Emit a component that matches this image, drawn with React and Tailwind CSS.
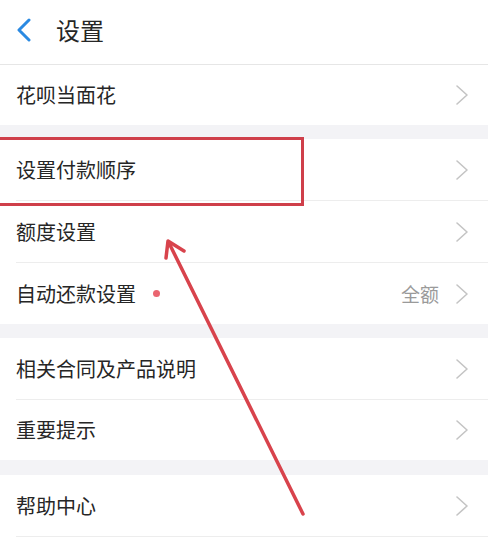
import React from "react";

const font = { fontFamily: '"Noto Sans CJK SC", "Noto Sans", sans-serif' };

function Chevron() {
  return (
    <svg width="14" height="22" viewBox="0 0 14 22" className="shrink-0">
      <polyline points="2,2 12,11 2,20" fill="none" stroke="#c4c4c4" strokeWidth="1.6" strokeLinecap="round" strokeLinejoin="round" />
    </svg>
  );
}

function Row({ label, value, dot, divider = true, h = "h-[61px]" }) {
  return (
    <div className={`${h} bg-white pl-4 flex`}>
      <div className={`flex-1 flex items-center pr-[19px] ${divider ? "border-b border-[#ededed]" : ""}`}>
        <span className="text-[20px] text-[#262626] leading-none">{label}</span>
        {dot && <span className="ml-[17px] w-[7px] h-[7px] rounded-full bg-[#ea6570]" />}
        <span className="flex-1" />
        {value && <span className="text-[19px] text-[#9a9a9a] mr-[16px] leading-none">{value}</span>}
        <Chevron />
      </div>
    </div>
  );
}

function Gap({ h }) {
  return <div className={`${h} bg-[#f3f3f6]`} />;
}

export default function App() {
  return (
    <div className="relative w-[488px] h-[538px] overflow-hidden bg-white" style={font}>
      {/* header */}
      <div className="h-[65px] flex items-center pb-[5px] border-b border-[#e6e6e6]">
        <svg width="16" height="24" viewBox="0 0 16 24" className="ml-[16px]">
          <polyline points="13,2 3,12 13,22" fill="none" stroke="#2b8ae2" strokeWidth="3" strokeLinecap="round" strokeLinejoin="round" />
        </svg>
        <span className="ml-[24px] text-[24px] text-[#262626] leading-none">设置</span>
      </div>

      <Row label="花呗当面花" divider={false} h="h-[60px]" />
      <Gap h="h-[14px]" />
      <Row label="设置付款顺序" h="h-[62px]" />
      <Row label="额度设置" h="h-[62px]" />
      <Row label="自动还款设置" value="全额" dot divider={false} />
      <Gap h="h-[14px]" />
      <Row label="相关合同及产品说明" h="h-[62px]" />
      <Row label="重要提示" divider={false} h="h-[60px]" />
      <Gap h="h-[15px]" />
      <Row label="帮助中心" h="h-[62px]" />

      {/* annotation box */}
      <div className="absolute left-[-4px] top-[137px] w-[308px] h-[69px] border-[3px] border-[#cf3f4a]" />

      {/* annotation arrow */}
      <svg className="absolute left-0 top-0" width="488" height="538" viewBox="0 0 488 538">
        <g stroke="#d8434c" strokeWidth="3.5" strokeLinecap="round" fill="none">
          <line x1="303" y1="514" x2="169" y2="243" />
          <polyline points="166,258 168,241 184,251" strokeLinejoin="round" />
        </g>
      </svg>
    </div>
  );
}
